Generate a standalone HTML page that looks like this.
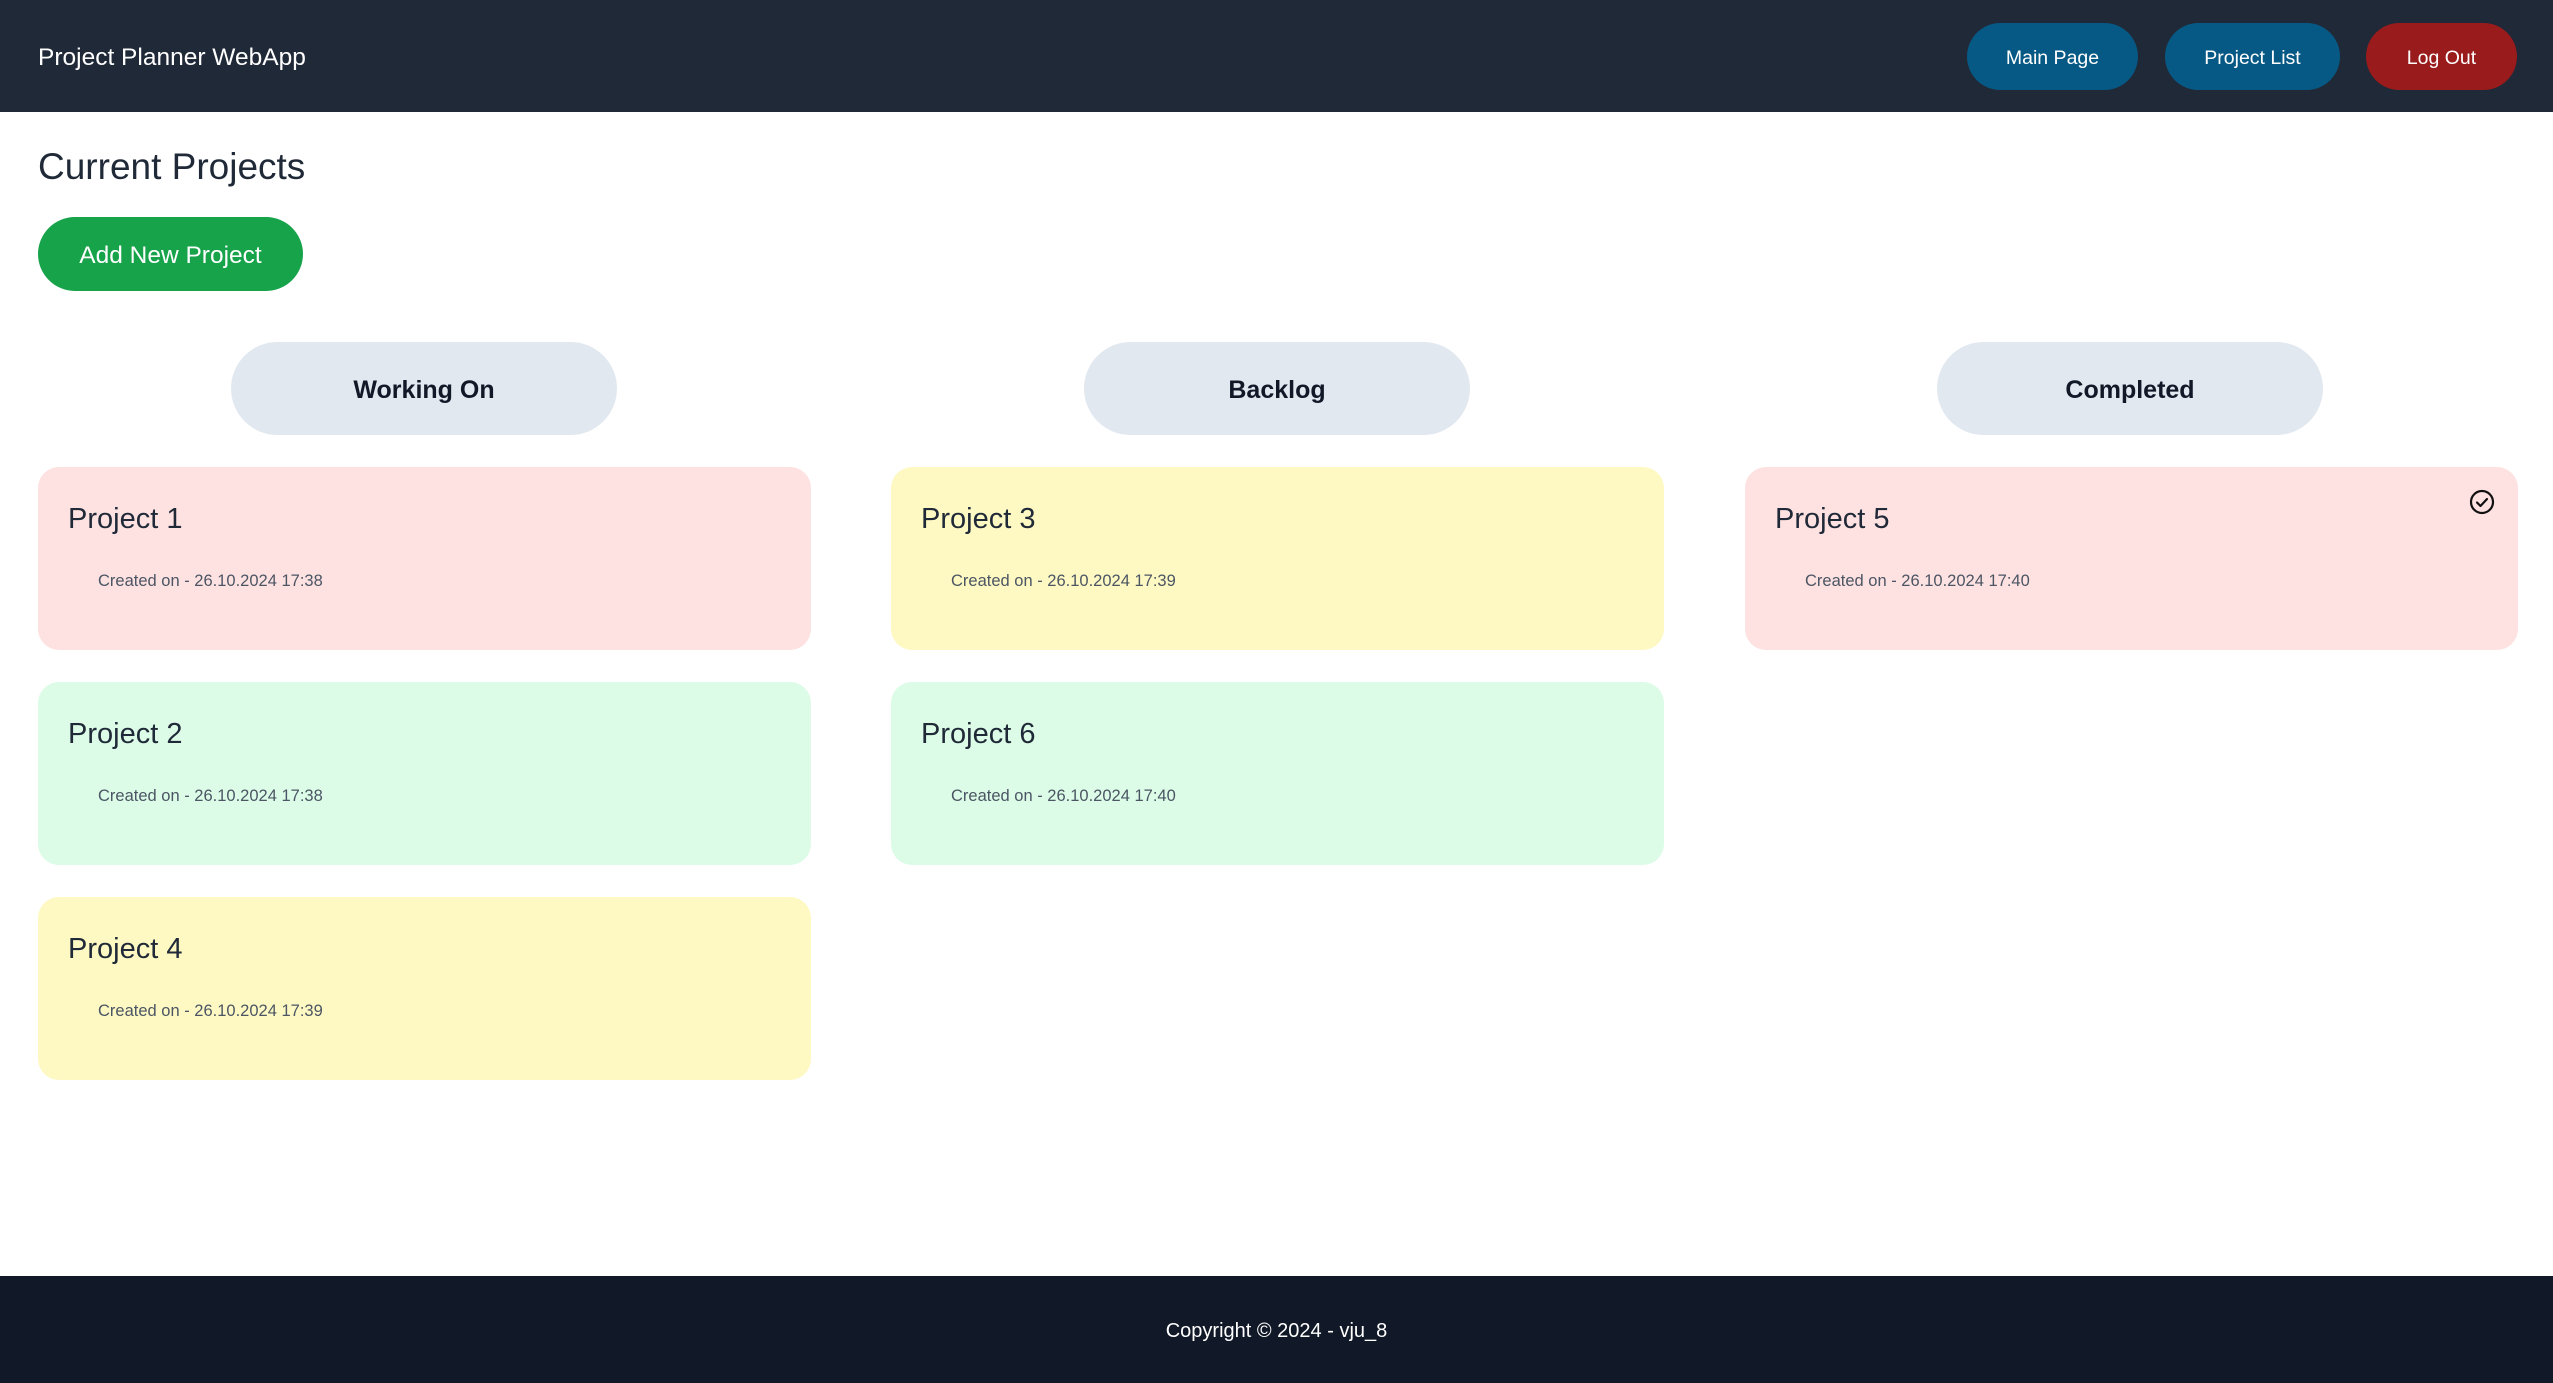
<!DOCTYPE html>
<html><head><meta charset="utf-8"><style>
*{margin:0;padding:0;box-sizing:border-box}
body{width:2553px;height:1383px;position:relative;background:#fff;font-family:"Liberation Sans",sans-serif;color:#111827;overflow:hidden}
.a{position:absolute}
.hdr{left:0;top:0;width:2553px;height:112px;background:#1f2937}
.ttl{left:38px;top:2px;height:112px;line-height:112px;color:#fff;font-size:24.5px}
.nb{top:23px;height:67px;border-radius:34px;color:#fff;font-size:19.5px;display:flex;align-items:center;justify-content:center;padding-top:3px}
.h1{left:38px;top:146px;font-size:37px;color:#1f2937}
.add{left:38px;top:217px;width:265px;height:74px;border-radius:37px;background:#16a34a;color:#fff;font-size:24.5px;display:flex;align-items:center;justify-content:center;padding-top:3px}
.pill{top:342px;width:386px;height:93px;border-radius:47px;background:#e2e8f0;font-weight:bold;font-size:25px;display:flex;align-items:center;justify-content:center;color:#111827;padding-top:4px}
.card{width:773px;height:183px;border-radius:21px}
.card .t{position:absolute;left:30px;top:36px;font-size:29px;color:#1f2937}
.card .d{position:absolute;left:60px;top:105px;font-size:16.5px;color:#4b5563}
.r{background:#fee2e2}.g{background:#dcfce7}.y{background:#fef9c3}
.ftr{left:0;top:1276px;width:2553px;height:107px;background:#111827;color:#fff;font-size:20px;display:flex;align-items:center;justify-content:center;padding-top:4px}
</style></head><body>
<div class="a hdr"></div>
<div class="a ttl">Project Planner WebApp</div>
<div class="a nb" style="left:1967px;width:171px;background:#075985">Main Page</div>
<div class="a nb" style="left:2165px;width:175px;background:#075985">Project List</div>
<div class="a nb" style="left:2366px;width:151px;background:#991b1b">Log Out</div>
<div class="a h1">Current Projects</div>
<div class="a add">Add New Project</div>
<div class="a pill" style="left:231px">Working On</div>
<div class="a pill" style="left:1084px">Backlog</div>
<div class="a pill" style="left:1937px">Completed</div>

<div class="a card r" style="left:38px;top:467px"><div class="t">Project 1</div><div class="d">Created on - 26.10.2024 17:38</div></div>
<div class="a card g" style="left:38px;top:682px"><div class="t">Project 2</div><div class="d">Created on - 26.10.2024 17:38</div></div>
<div class="a card y" style="left:38px;top:897px"><div class="t">Project 4</div><div class="d">Created on - 26.10.2024 17:39</div></div>
<div class="a card y" style="left:891px;top:467px"><div class="t">Project 3</div><div class="d">Created on - 26.10.2024 17:39</div></div>
<div class="a card g" style="left:891px;top:682px"><div class="t">Project 6</div><div class="d">Created on - 26.10.2024 17:40</div></div>
<div class="a card r" style="left:1745px;top:467px"><div class="t">Project 5</div><div class="d">Created on - 26.10.2024 17:40</div>
<svg style="position:absolute;left:724px;top:22px" width="26" height="26" viewBox="0 0 26 26"><circle cx="13" cy="13" r="11" fill="none" stroke="#111" stroke-width="2.2"/><path d="M8 13.5l3.5 3.5 6.5-7" fill="none" stroke="#111" stroke-width="2.2" stroke-linecap="round" stroke-linejoin="round"/></svg></div>
<div class="a ftr">Copyright © 2024 - vju_8</div>
</body></html>
